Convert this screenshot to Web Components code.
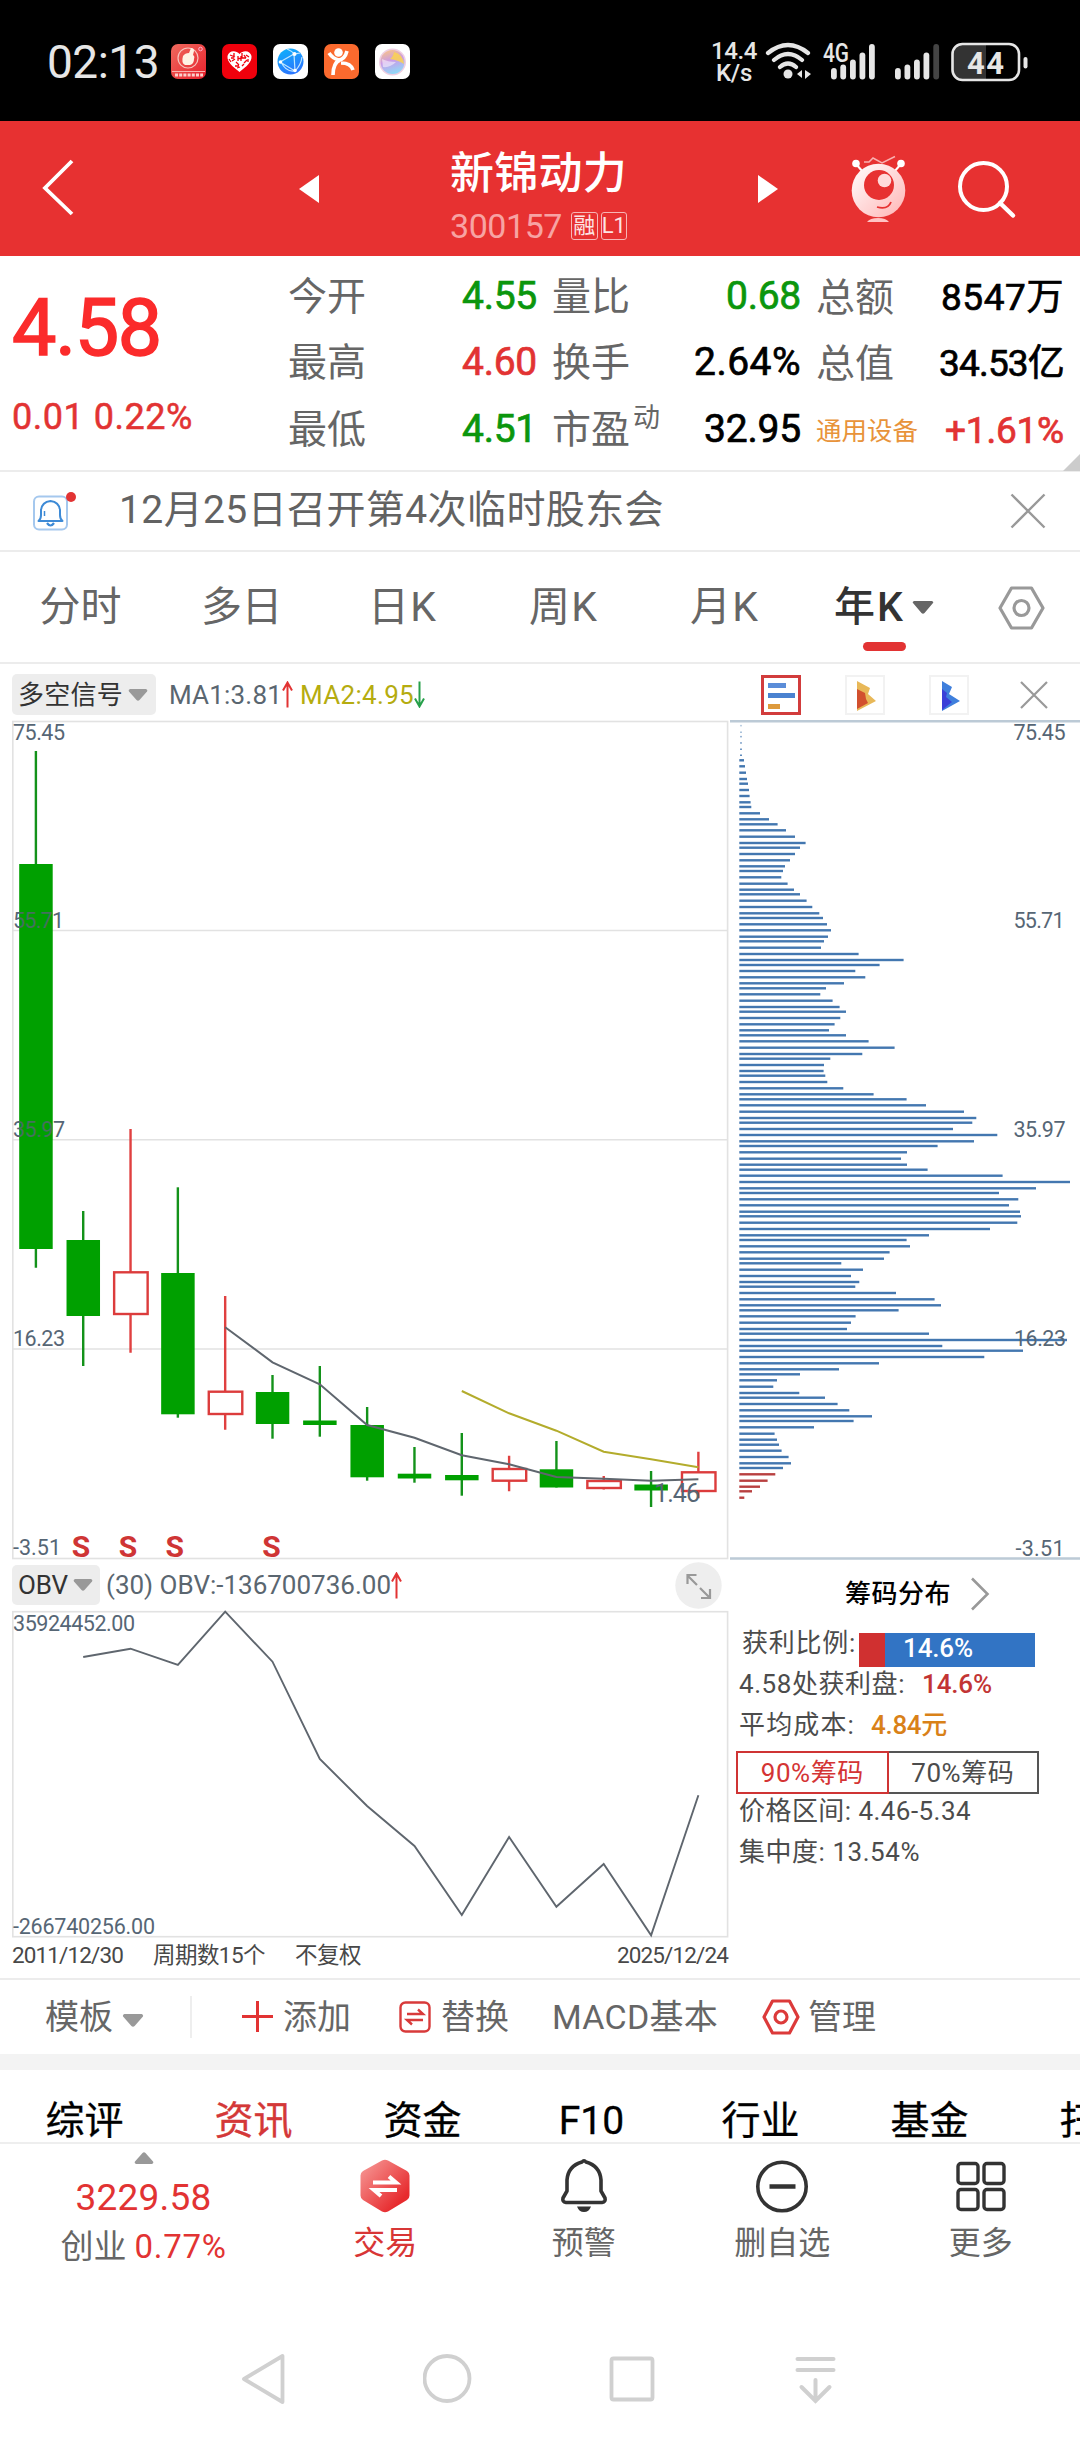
<!DOCTYPE html>
<html lang="zh-CN">
<head>
<meta charset="utf-8">
<title>新锦动力 300157</title>
<style>
  * { box-sizing: border-box; }
  html, body { margin: 0; padding: 0; }
  body {
    width: 1080px;
    height: 2440px;
    overflow: hidden;
    background: #fff;
    font-family: Roboto, "Noto Sans CJK SC", sans-serif;
    line-height: 1;
    --red: #e23333;
    --green: #0b960d;
    --gray: #666;
    --slate: #5a6670;
  }
</style>
</head>
<body>
<stock-app></stock-app>

<script>
// registers an element whose shadow root is a clone of the given markup
function component(name, html, Base = HTMLElement) {
  const template = document.createElement('template');
  template.innerHTML = `<style>*{box-sizing:border-box} svg{display:block;flex:none} :host{display:block;box-sizing:border-box}</style>` + html;
  customElements.define(name, class extends Base {
    constructor() {
      super();
      this.attachShadow({ mode: 'open' });
      this.shadowRoot.appendChild(template.content.cloneNode(true));
    }
  });
}

// single line of text, tracked so that it takes exactly `w` pixels
class TextRun extends HTMLElement {
  connectedCallback() {
    if (!this.shadowRoot) {
      this.attachShadow({ mode: 'open' });
      this.shadowRoot.innerHTML = `<style>
        :host { display: block; flex: none; white-space: nowrap; width: max-content; }
      </style><slot></slot>`;
    }
    const w = Number(this.getAttribute('w'));
    const n = this.textContent.length;
    if (!w || !n) return;
    const natural = this.getBoundingClientRect().width;
    this.style.letterSpacing = ((w - natural) / n).toFixed(3) + 'px';
    this.style.width = w + 'px';
  }
}
customElements.define('text-run', TextRun);

component('status-bar', `
  <style>
    :host { display: flex; height: 121px; background: #000; color: #e6e6e6; padding: 0 52px 0 47px; }
    .left, .right { display: flex; align-items: center; height: 123px; }
    .left { flex: 1; gap: 16px; }
    .time { font-size: 46px; margin-right: -4px; }
    .rate { font-size: 24px; line-height: 22px; margin-right: 8px; text-align: center; font-weight: 500; }
    .rate text-run { margin: 0 auto; }
  </style>
  <div class="left">
    <text-run class="time" w="112">02:13</text-run>
    <svg width="35" height="35" viewBox="0 0 35 35">
      <defs><linearGradient id="a" x2="1" y2="1"><stop stop-color="#ef6a5e"/><stop offset="1" stop-color="#e8202c"/></linearGradient></defs>
      <rect width="35" height="35" rx="7" fill="url(#a)"/>
      <circle cx="17" cy="14" r="10" fill="none" stroke="#f6c4bc" stroke-width="1.2"/>
      <path d="M12 12q2-3 6-3l2-5q3 0 3 3l-1 4q2 1 1 4 0 5-4 6h-5q-4-2-2-9z" fill="#fff2e4"/>
      <circle cx="29.500" cy="5" r="1.800" fill="none" stroke="#fbd" stroke-width=".9"/>
      <path d="M1 27.500h33" stroke="#f9b3ae" stroke-width="1"/>
      <path d="M4 31h28" stroke="#fbd0cc" stroke-width="3" stroke-dasharray="3 1.200"/>
    </svg>
    <svg width="35" height="35" viewBox="0 0 35 35">
      <rect width="35" height="35" rx="7" fill="#f0000c"/>
      <path d="M17.500 28C10 22 5 18 5.500 12 7 6 14 6 17.500 10 21 6 28 6 29.500 12 30 18 25 22 17.500 28z" fill="#fff"/>
      <path d="M8 11l5 2M10 17l3-2M14 18l3 3M20 9v5h4M16 12v5M19 12v5M16 14.500h3M22 19l3-3M13 22h4M20 22l2-2M9 14h3M24 11l3 2M12 9v3M26 15v3M15 24l3-1M7 15l2 3M22 11l2 3" stroke="#f0000c" stroke-width="1.300" fill="none"/>
    </svg>
    <svg width="35" height="35" viewBox="0 0 35 35">
      <defs><linearGradient id="b" x2=".4" y2="1"><stop stop-color="#0db4fa"/><stop offset="1" stop-color="#2a77ff"/></linearGradient></defs>
      <rect width="35" height="35" rx="7" fill="#fff"/>
      <circle cx="17.500" cy="17.500" r="13" fill="url(#b)"/>
      <path d="M7 18L21 10l1 17zM14 5q5 2 7 5l6-1M21 27q-8 1-13-9M22 27q6-6 7-14" fill="none" stroke="#bfe6ff" stroke-width="1.200"/>
      <circle cx="21.500" cy="10" r="2" fill="#fff"/><circle cx="7.500" cy="18" r="1.800" fill="#fff"/><circle cx="22" cy="26.500" r="1.800" fill="#fff"/>
    </svg>
    <svg width="35" height="35" viewBox="0 0 35 35">
      <rect width="35" height="35" rx="7" fill="#fb6a2e"/>
      <circle cx="14.500" cy="8.500" r="4.300" fill="#fff"/>
      <path d="M5 9q4 6 10 7 6-1 8-9M9 31q0-12 7-15M17 19q10 0 12 7" fill="none" stroke="#fff" stroke-width="3.600"/>
    </svg>
    <svg width="35" height="35" viewBox="0 0 35 35">
      <defs><linearGradient id="c" x1=".3" x2=".6" y2="1"><stop stop-color="#f7c28c"/><stop offset=".45" stop-color="#c99be8"/><stop offset="1" stop-color="#8ddcf8"/></linearGradient></defs>
      <rect width="35" height="35" rx="7" fill="#fff"/>
      <circle cx="17.500" cy="18" r="13.500" fill="#efcfe2"/>
      <circle cx="17.500" cy="18" r="12" fill="url(#c)"/>
      <path d="M19 8q9 2 10 12-6-4-14-5 3-2 4-7z" fill="#fbd34e" opacity=".85"/>
      <path d="M7 15q6 3 14 3-6 6-13 5z" fill="#fff" opacity=".5"/>
    </svg>
  </div>
  <div class="right">
    <div class="rate"><text-run w="46">14.4</text-run><text-run w="36">K/s</text-run></div>
    <svg width="50" height="40" viewBox="0 0 50 40" fill="none" stroke="#e6e6e6" stroke-width="4.200" stroke-linecap="round">
      <path d="M3 11q20-16 40 0M9 18q14-12 28 0M15 25q8-7 16 0"/>
      <circle cx="23" cy="32" r="4.500" fill="#e6e6e6" stroke="none"/>
      <path d="M37 28l-5 4 5 4zM40 28l6 4-6 5z" fill="#e6e6e6" stroke="none"/>
    </svg>
    <svg width="135" height="44" viewBox="815 39 135 44" fill="#e6e6e6">
      <text x="823" y="61" font-size="25" font-weight="500" textLength="26" lengthAdjust="spacingAndGlyphs">4G</text>
      <rect x="831" y="67" width="5.800" height="11.500" rx="2.900"/><rect x="840.300" y="63.500" width="5.800" height="15" rx="2.900"/>
      <rect x="850" y="58.500" width="5.800" height="20" rx="2.900"/><rect x="859.500" y="51.500" width="5.800" height="27" rx="2.900"/>
      <rect x="869" y="43" width="5.800" height="35.500" rx="2.900"/>
      <rect x="895" y="67" width="5.800" height="11.500" rx="2.900"/><rect x="904.500" y="63.500" width="5.800" height="15" rx="2.900"/>
      <rect x="914" y="58.500" width="5.800" height="20" rx="2.900"/><rect x="923.500" y="51.500" width="5.800" height="27" rx="2.900"/>
      <rect x="933.300" y="43" width="5.800" height="35.500" rx="2.900" fill="#444"/>
    </svg>
    <svg width="78" height="40" viewBox="950 40 78 40">
      <rect x="952.500" y="42" width="66.500" height="36" rx="10" fill="#000"/>
      <path d="M986 42H962q-9.500 0-9.500 10v16q0 10 9.500 10h24z" fill="#333"/>
      <rect x="952.500" y="42" width="66.500" height="36" rx="10" fill="none" stroke="#e6e6e6" stroke-width="2.600"/>
      <rect x="1023.500" y="55" width="4" height="11.500" rx="2" fill="#e6e6e6"/>
      <text x="967" y="72" font-size="31" font-weight="700" fill="#e6e6e6" textLength="37">44</text>
    </svg>
  </div>
`);

component('stock-header', `
  <style>
    :host { display: flex; align-items: center; height: 135px; padding: 0 0 4px 41px; background: #e73131; color: #fff; }
    .title { margin: 17px 131px 0 131px; width: 177px; }
    .name { font-size: 44px; font-weight: 500; height: 61px; line-height: 48px; }
    .sub { display: flex; align-items: center; gap: 3px; height: 30px; }
    .code { font-size: 34px; color: #f7a3a3; margin-right: 6px; }
    .badge {
      display: flex; align-items: center; justify-content: center;
      width: 27px; height: 28px; border: 1.500px solid #f7b5b5; border-radius: 3px; font-size: 22px; color: #fde4e4;
    }
  </style>
  <svg width="34" height="60" viewBox="0 0 34 60"><path d="M31 4L4 31l27 26" fill="none" stroke="#fff" stroke-width="3.800"/></svg>
  <svg style="margin:4px 0 0 224px" width="20" height="28" viewBox="0 0 20 28"><path d="M0 14L20 0v28z" fill="#fff"/></svg>
  <div class="title">
    <text-run class="name" w="177">新锦动力</text-run>
    <div class="sub">
      <text-run class="code" w="112">300157</text-run>
      <span class="badge">融</span><span class="badge">L1</span>
    </div>
  </div>
  <svg style="margin-top:4px" width="20" height="28" viewBox="0 0 20 28"><path d="M20 14L0 0v28z" fill="#fff"/></svg>
  <svg style="margin:6px 0 0 71px" width="60" height="70" viewBox="850 154 60 70">
    <defs><linearGradient id="m" x2="1" y2="1"><stop stop-color="#fff"/><stop offset="1" stop-color="#ffb4b4"/></linearGradient></defs>
    <path d="M857 163l7 8M902 163l-7 8" stroke="#fff" stroke-width="2"/>
    <circle cx="857" cy="162.500" r="3.800" fill="#fff"/><circle cx="902" cy="162.500" r="3.800" fill="#fff"/>
    <path d="M865 161h5l4-4 9 5 13-6.500" fill="none" stroke="#f9b0b0" stroke-width="1.500"/>
    <circle cx="879.500" cy="189.500" r="26.800" fill="url(#m)"/>
    <circle cx="880" cy="184" r="15" fill="#e73131"/>
    <circle cx="885.500" cy="179.500" r="6.800" fill="#ffdada"/>
    <path d="M878 206q11 3 14-5" fill="none" stroke="#e73131" stroke-width="1.800"/>
    <path d="M868 221q3-4 11-4t11 4z" fill="#ffc4c4"/>
  </svg>
  <svg style="margin:4px 0 0 46px" width="64" height="64" viewBox="955 156 64 64" fill="none" stroke="#fff" stroke-width="4">
    <circle cx="983.500" cy="185.500" r="23.500"/><path d="M1000 202l13 12.500" stroke-width="4.500" stroke-linecap="round"/>
  </svg>
`);

component('stat-cell', `
  <style>
    :host { display: flex; align-items: center; justify-content: space-between; color: #000; font-size: 39px; height: 66.500px; }
    .label { display: flex; color: var(--gray); font-size: var(--label-size, 39px); padding-top: 2px; }
    .value { font-size: var(--value-size, 39px); -webkit-text-stroke: .7px; }
  </style>
  <div class="label"><slot name="label"></slot></div>
  <div class="value"><slot></slot></div>
`);

component('quote-panel', `
  <style>
    :host { display: flex; height: 216px; border-bottom: 2px solid #ececec; position: relative; }
    .price { width: 288px; padding: 32px 0 0 12px; color: var(--red); }
    .last { font-size: 79px; line-height: 80px; color: #fb2b2b; -webkit-text-stroke: 1.600px; }
    .diff { font-size: 36px; line-height: 40px; margin-top: 29px; -webkit-text-stroke: .5px; }
    .col { width: 249px; margin-right: 15px; padding-top: 7px; }
    .col.last-col { width: 248px; margin: 0; padding-top: 8px; --value-size: 37px; }
    .up { color: var(--red); }
    .down { color: var(--green); }
    sup { font-size: 27px; line-height: 27px; margin: -6px 0 0 3px; }
    .corner { position: absolute; right: 0; bottom: -1px; }
  </style>
  <div class="price">
    <text-run class="last" w="149">4.58</text-run>
    <text-run class="diff" w="181">0.01 0.22%</text-run>
  </div>
  <div class="col">
    <stat-cell><span slot="label">今开</span><text-run class="down" w="75">4.55</text-run></stat-cell>
    <stat-cell><span slot="label">最高</span><text-run class="up" w="75">4.60</text-run></stat-cell>
    <stat-cell><span slot="label">最低</span><text-run class="down" w="75">4.51</text-run></stat-cell>
  </div>
  <div class="col">
    <stat-cell><span slot="label">量比</span><text-run class="down" w="75">0.68</text-run></stat-cell>
    <stat-cell><span slot="label">换手</span><text-run w="107">2.64%</text-run></stat-cell>
    <stat-cell><span slot="label">市盈</span><sup slot="label">动</sup><text-run w="97">32.95</text-run></stat-cell>
  </div>
  <div class="col last-col">
    <stat-cell><span slot="label">总额</span><text-run w="123">8547万</text-run></stat-cell>
    <stat-cell><span slot="label">总值</span><text-run w="125">34.53亿</text-run></stat-cell>
    <stat-cell style="--label-size:25.500px"><span slot="label" style="color:#e8933a">通用设备</span><text-run class="up" w="119">+1.61%</text-run></stat-cell>
  </div>
  <svg class="corner" width="17" height="17" viewBox="0 0 17 17"><path d="M17 0v17H0z" fill="#ccc"/></svg>
`);

component('notice-bar', `
  <style>
    :host { display: flex; align-items: center; height: 80px; padding: 0 34px 1px 31px; border-bottom: 2px solid #ececec; }
    .text { flex: 1; margin-left: 42px; font-size: 39px; color: #626262; }
  </style>
  <svg width="46" height="44" viewBox="30 488 46 44" fill="none" stroke="#3d8ad6">
    <rect x="33" y="495.500" width="33" height="33" rx="5" stroke="#a5c8ee" stroke-width="2"/>
    <path d="M37.500 520q2.500-2 2.500-6v-5q1-8 9.500-9 8.500 1 9.500 9v5q0 4 2.500 6z" stroke-width="2" stroke-linejoin="round"/>
    <path d="M46 522q3.500 5 7 0" stroke-width="2.200"/><path d="M43.500 515v-5" stroke-width="1.500"/>
    <circle cx="70" cy="496" r="5" fill="#e23333" stroke="none"/>
  </svg>
  <div class="text"><text-run w="545">12月25日召开第4次临时股东会</text-run></div>
  <svg width="36" height="36" viewBox="0 0 36 36"><path d="M1.500 1.500l33 33M34.500 1.500l-33 33" stroke="#999" stroke-width="2.400"/></svg>
`);

component('period-tabs', `
  <style>
    :host { display: flex; height: 112px; border-bottom: 2px solid #ececec; font-size: 41px; color: var(--gray); }
    .tab { position: relative; width: 161px; display: flex; align-items: center; justify-content: center; gap: 7px; padding-top: 1px; }
    .active { color: #333; font-weight: 500; padding-right: 3px; }
    .active::after {
      content: ""; position: absolute; left: 58px; bottom: 11px; width: 43px; height: 9px; border-radius: 5px; background: var(--red);
    }
    .gear { margin: 34px 0 0 31px; }
  </style>
  <div class="tab">分时</div>
  <div class="tab"><text-run w="81">多日</text-run></div>
  <div class="tab"><text-run w="69">日K</text-run></div>
  <div class="tab"><text-run w="69">周K</text-run></div>
  <div class="tab"><text-run w="69">月K</text-run></div>
  <div class="tab active"><text-run w="71">年K</text-run><svg width="22" height="13" viewBox="0 0 22 13"><path d="M2 0h18q2 1 1 2L12.500 12q-1.500 1.500-3 0L1 2Q0 1 2 0z" fill="#666"/></svg></div>
  <svg class="gear" width="50" height="44" viewBox="0 0 50 44" fill="none" stroke="#999" stroke-width="3.200">
    <path d="M14.500 2h20L46 22 34.500 42h-20L3 22z" stroke-linejoin="round"/><circle cx="24.500" cy="22" r="7.500"/>
  </svg>
`);

component('menu-pill', `
  <style>
    :host { display: flex; align-items: center; flex: none; height: 41px; gap: 5px; padding-left: 6px; background: #ededed; border-radius: 5px; font-size: 26px; color: #333; }
  </style>
  <slot></slot>
  <svg width="20" height="12" viewBox="0 0 20 12"><path d="M2 0h16q2 1 1 2.500L11.500 11q-1.500 1.500-3 0L1 2.500Q0 1 2 0z" fill="#999"/></svg>
`);

component('trend-arrow', `
  <style>
    :host { flex: none; width: 11px; color: var(--red); }
    :host([down]) { color: #26a04a; transform: rotate(180deg); }
  </style>
  <svg width="11" height="27" viewBox="0 0 11 27"><path d="M5.500 26.500V2M1 9.500L5.500 1.500l4.500 8" fill="none" stroke="currentColor" stroke-width="2"/></svg>
`);

component('indicator-bar', `
  <style>
    :host { display: flex; align-items: center; height: 56px; padding: 5px 31px 0 12px; font-size: 26px; color: var(--slate); }
    menu-pill { width: 144px; }
    .ma1 { margin-left: 13px; }
    .ma2 { margin-left: 7px; color: #b5ac10; }
    .spacer { flex: 1; }
    .modes { display: flex; align-items: center; gap: 44px; }
  </style>
  <menu-pill><text-run w="105">多空信号</text-run></menu-pill>
  <text-run class="ma1" w="113">MA1:3.81</text-run><trend-arrow></trend-arrow>
  <text-run class="ma2" w="114">MA2:4.95</text-run><trend-arrow down></trend-arrow>
  <div class="spacer"></div>
  <div class="modes">
    <svg width="40" height="40" viewBox="0 0 40 40">
      <rect x="1.500" y="1.500" width="37" height="37" fill="#fff" stroke="#d23c3c" stroke-width="3"/>
      <rect x="7" y="8" width="18" height="5" fill="#5b8dd8"/><rect x="7" y="18" width="27" height="5" fill="#4a82d0"/><rect x="7" y="29" width="12" height="5" fill="#dd9a3c"/>
    </svg>
    <svg width="40" height="40" viewBox="0 0 40 40">
      <rect x="1" y="1" width="38" height="38" fill="#fff" stroke="#f2f2f2" stroke-width="2"/>
      <path d="M12 6l13 7-2 6 8 7-19 10z" fill="#e8b858"/><path d="M12 14l8 4 1 6 2 4-11 6z" fill="#d2502e"/>
    </svg>
    <svg width="40" height="40" viewBox="0 0 40 40">
      <rect x="1" y="1" width="38" height="38" fill="#fff" stroke="#f2f2f2" stroke-width="2"/>
      <path d="M13 6l10 6-3 7 11 7-18 10z" fill="#3f7fdc"/><path d="M13 14l5 4-1 4 6 5-10 8z" fill="#3a3fd8"/>
    </svg>
    <svg style="margin-left:6px" width="30" height="30" viewBox="0 0 30 30"><path d="M2 2l26 26M28 2L2 28" stroke="#999" stroke-width="2.200"/></svg>
  </div>
`);

// x centre of the n-th yearly bar, shared by both charts
const barX = n => 35.9 + 47.32 * n;
const points = (ys, first) => ys.map((y, i) => `${barX(first + i).toFixed(1)},${y}`).join(' ');
const label = (x, y, text, w, size = 21.5) =>
  `<text x="${x}" y="${y}" font-size="${size}" textLength="${w}" fill="#566675">${text}</text>`;

// high, body top, body bottom, low, rising
const CANDLES = [
  [31, 144, 529, 547.7, 0], [491, 520, 596, 646, 0], [409, 552.3, 594, 632.7, 1],
  [467.3, 553, 694.3, 697.7, 0], [576, 671.7, 694, 709.7, 1], [655, 672, 704, 718.7, 0],
  [646, 700.5, 705, 716.7, 0], [687, 705, 757.3, 760.7, 0], [727, 753.7, 758.5, 762.7, 0],
  [713, 755, 760.3, 775.7, 0], [735.7, 749, 760.7, 771.3, 1], [721, 749.3, 767.5, 767.5, 0],
  [756, 761, 768, 769.5, 1], [751, 764.5, 770.5, 787, 0], [731.7, 752.3, 771, 778.3, 1]
];
const MA1 = [607.3, 642.3, 664.3, 705, 717.7, 735.3, 744.3, 757, 758.7, 760.7, 759.3];
const MA2 = [671, 693.3, 710.7, 731.7, 739.3, 747.3];

class CandleChart extends HTMLElement {
  constructor() {
    super();
    this.attachShadow({ mode: 'open' });
    const candles = CANDLES.map(([high, top, bottom, low, rising], i) => {
      const x = barX(i);
      if (rising) {
        return `<path d="M${x} ${high}V${top}M${x} ${bottom}V${low}" stroke="#e04040" stroke-width="2.400"/>
          <rect x="${x - 16.4}" y="${top}" width="33.500" height="${bottom - top}" fill="none" stroke="#dc3c3c" stroke-width="2.400"/>`;
      }
      return `<path d="M${x} ${high}V${low}" stroke="#13921a" stroke-width="2.400"/>
        <rect x="${x - 16.7}" y="${top}" width="33.500" height="${bottom - top}" fill="#00a000"/>`;
    }).join('');
    const grid = [210.5, 419.7, 629].map(y => `<path d="M13 ${y}H727.500" stroke="#e2e2e2" stroke-width="1.600"/>`).join('');
    const signals = [81, 128, 174.7, 271.5].map(x =>
      `<text x="${x}" y="837" font-size="30" font-weight="700" fill="#cf3535" text-anchor="middle">S</text>`).join('');
    this.shadowRoot.innerHTML = `
      <style>:host { display: block; } svg { display: block; overflow: visible; }</style>
      <svg width="730" height="840" viewBox="0 0 730 840">
        <rect x="12.800" y="1.500" width="714.800" height="837" fill="none" stroke="#e2e2e2" stroke-width="1.600"/>
        ${grid}${candles}
        <polyline points="${points(MA1, 4)}" fill="none" stroke="#5f666e" stroke-width="2"/>
        <polyline points="${points(MA2, 9)}" fill="none" stroke="#b3ac2c" stroke-width="2"/>
        ${label(13, 20, '75.45', 52)}${label(13, 208, '55.71', 51)}${label(13, 416.500, '35.97', 52)}
        ${label(13, 626, '16.23', 52)}${label(13, 835, '-3.51', 48)}
        <rect x="19.200" y="190" width="33.500" height="230" fill="#00a000" opacity=".2"/>
        ${label(654, 782, '1.46', 46, 25)}
        ${signals}
      </svg>`;
  }
}
customElements.define('candle-chart', CandleChart);

// y and right end of each price level, in thirds of a pixel
const CHIPS = `151:72 169:75 188:78 207:81 221:84 240:87 258:89 277:92 291:94 310:120 328:147 343:173 361:198
380:225 399:257 413:240 432:225 451:210 469:195 483:189 502:184 521:203 539:222 553:240 572:260 591:277
610:298 624:309 643:321 661:333 680:324 694:312 713:303 732:416 750:551 765:479 783:406 802:436 820:372
835:318 853:301 872:338 891:359 905:378 924:361 943:344 961:327 976:378 994:446 1013:524 1032:427 1046:331
1065:312 1083:311 1097:316 1116:322 1135:370 1153:461 1168:560 1186:618 1205:732 1224:769 1238:757 1257:699
1275:832 1294:762 1308:653 1327:561 1346:543 1364:561 1379:623 1397:848 1416:1050 1435:948 1449:837 1468:895
1486:867 1505:900 1519:903 1538:892 1557:810 1576:627 1590:560 1609:570 1627:509 1646:492 1660:364 1679:429
1698:393 1716:418 1730:406 1749:528 1768:644 1786:663 1801:536 1819:407 1838:393 1857:381 1871:627 1890:1041
1908:667 1922:909 1941:793 1960:477 1978:357 1993:240 2011:171 2030:160 2049:238 2063:315 2082:353 2101:388
2119:456 2133:401 2152:282 2171:164 2189:171 2204:177 2222:185 2241:206 2260:213 2274:189 2293:166 2312:143
2330:120 2344:96 2363:73`.split(/\s+/).map(s => s.split(':').map(Number));

class ChipChart extends HTMLElement {
  constructor() {
    super();
    this.attachShadow({ mode: 'open' });
    const bars = CHIPS.map(([y, x]) =>
      `<rect x="9.300" y="${(y / 3 - 11.2).toFixed(1)}" width="${((x - 58) / 3).toFixed(1)}" height="2.400" fill="${y > 2280 ? '#b84040' : '#4377b0'}"/>`).join('');
    const dots = [47, 67, 80, 99, 118, 136].map((y, i) =>
      `<rect x="10" y="${(y / 3 - 10.8).toFixed(1)}" width="2" height="1.500" fill="#4377b0" opacity="${0.35 + i * 0.1}"/>`).join('');
    this.shadowRoot.innerHTML = `
      <style>:host { display: block; } svg { display: block; overflow: visible; }</style>
      <svg width="350" height="840" viewBox="0 0 350 840">
        <path d="M0 1.200H350M0 838.500H350" stroke="#bccad6" stroke-width="2.600"/>
        ${dots}${bars}
        ${label(283.5, 20, '75.45', 52)}${label(283.5, 208, '55.71', 51)}${label(283.5, 416.5, '35.97', 52)}
        ${label(284, 626, '16.23', 52)}${label(285.5, 835.5, '-3.51', 49)}
      </svg>`;
  }
}
customElements.define('chip-chart', ChipChart);

component('obv-header', `
  <style>
    :host { display: flex; align-items: center; height: 50px; padding: 0 8px 0 12px; font-size: 26px; color: var(--slate); }
    menu-pill { width: 88px; height: 40px; }
    .value { margin-left: 6px; }
    .spacer { flex: 1; }
  </style>
  <menu-pill><text-run w="50">OBV</text-run></menu-pill>
  <text-run class="value" w="285">(30) OBV:-136700736.00</text-run><trend-arrow></trend-arrow>
  <div class="spacer"></div>
  <svg width="47" height="47" viewBox="0 0 47 47">
    <circle cx="23.500" cy="23.500" r="23.200" fill="#eee"/>
    <path d="M22 23L13 14M12.500 22v-9h9M25 26l9 9M35 27v9h-9" fill="none" stroke="#999" stroke-width="2.200"/>
  </svg>
`);

const OBV = [47, 38.7, 55, 1.7, 51.7, 149, 196, 236, 305, 227, 296.7, 254, 325.3, 185.3];

component('obv-chart', `
  <svg width="730" height="328" viewBox="0 0 730 328">
    <rect x="12.800" y="1.700" width="714.800" height="325" fill="none" stroke="#e2e2e2" stroke-width="1.600"/>
    <polyline points="${points(OBV, 1)}" fill="none" stroke="#5f666e" stroke-width="1.900"/>
    ${label(13, 20.5, '35924452.00', 122)}${label(13, 323.5, '-266740256.00', 142)}
  </svg>
`);

component('axis-row', `
  <style>
    :host { display: flex; align-items: center; height: 40px; padding: 0 2px 6px 12px; font-size: 22.500px; color: #484848; }
    .group { flex: 1; display: flex; gap: 30px; }
  </style>
  <div class="group">
    <text-run w="111">2011/12/30</text-run>
    <text-run w="112">周期数15个</text-run>
    <text-run w="66">不复权</text-run>
  </div>
  <text-run w="111">2025/12/24</text-run>
`);

component('chip-info', `
  <style>
    :host { padding: 16px 0 0 9px; font-size: 26px; color: #4c4c4c; }
    .title { display: flex; align-items: center; height: 36px; padding-left: 106px; color: #000; font-weight: 500; gap: 19px; }
    .row { display: flex; align-items: center; height: 41px; }
    .ratio { height: 40px; margin-top: 11px; padding-left: 3px; }
    .bar { display: flex; align-items: center; width: 176px; height: 34px; margin: 14px 0 0 3px; padding: 0 0 4px 44px;
      background: linear-gradient(90deg, #d03030 26px, #3274c4 26px); color: #fff; font-weight: 500; }
    .profit { color: #c23434; font-weight: 500; margin-left: 17px; }
    .cost { color: #d98118; font-weight: 500; margin-left: 16px; }
    .switch { display: flex; width: 303px; height: 43px; margin: 6px 0 0 -3px; }
    .switch div { flex: 1; display: flex; align-items: center; justify-content: center; border: 2.500px solid #555; }
    .switch .on { color: #d43434; border-color: #cf3434; margin-right: -2px; z-index: 1; }
  </style>
  <div class="title"><text-run w="106">筹码分布</text-run>
    <svg width="20" height="34" viewBox="0 0 20 34"><path d="M2 1.500L17.500 17 2 32.500" fill="none" stroke="#999" stroke-width="2.600"/></svg></div>
  <div class="row ratio"><text-run w="114">获利比例:</text-run><div class="bar"><text-run w="70">14.6%</text-run></div></div>
  <div class="row"><text-run w="166">4.58处获利盘:</text-run><text-run class="profit" w="70">14.6%</text-run></div>
  <div class="row"><text-run w="116">平均成本:</text-run><text-run class="cost" w="76">4.84元</text-run></div>
  <div class="switch"><div class="on"><text-run w="103">90%筹码</text-run></div><div><text-run w="103">70%筹码</text-run></div></div>
  <div class="row" style="margin-top:-4px"><text-run w="232">价格区间: 4.46-5.34</text-run></div>
  <div class="row"><text-run w="181">集中度: 13.54%</text-run></div>
`);

component('template-bar', `
  <style>
    :host { display: flex; align-items: center; height: 92px; padding: 0 0 17px 45px; font-size: 34px; color: var(--gray);
      border-top: 2px solid #ececec; background: linear-gradient(#fff 74px, #f3f3f3 74px); }
    .rule { width: 2px; height: 42px; margin: 0 50px 0 46px; background: #eee; }
  </style>
  <text-run w="68">模板</text-run>
  <svg style="margin:8px 0 0 9px" width="22" height="13" viewBox="0 0 20 12"><path d="M2 0h16q2 1 1 2.500L11.500 11q-1.500 1.500-3 0L1 2.500Q0 1 2 0z" fill="#999"/></svg>
  <div class="rule"></div>
  <svg width="31" height="31" viewBox="0 0 31 31"><path d="M15.500 0v31M0 15.500h31" stroke="#e23333" stroke-width="3"/></svg>
  <text-run style="margin-left:10px" w="68">添加</text-run>
  <svg style="margin-left:48px" width="32" height="32" viewBox="0 0 32 32" fill="none" stroke="#d83a3a" stroke-width="2.400">
    <rect x="1.500" y="1.500" width="29" height="29" rx="5"/><path d="M8 13h16l-5-4.500M24 19H8l5 4.500"/>
  </svg>
  <text-run style="margin-left:10px" w="68">替换</text-run>
  <text-run style="margin-left:43px" w="166">MACD基本</text-run>
  <svg style="margin-left:44px" width="38" height="36" viewBox="0 0 38 36" fill="none" stroke="#dc3a3a" stroke-width="3.200">
    <path d="M10.500 2h17L36 18l-8.500 16h-17L2 18z" stroke-linejoin="round"/><circle cx="19" cy="18" r="6"/>
  </svg>
  <text-run style="margin-left:8px" w="68">管理</text-run>
`);

component('content-tabs', `
  <style>
    :host { display: flex; height: 74px; padding-top: 28px; font-size: 39px; line-height: 46px; color: #000;
      border-bottom: 2px solid #eee; overflow: hidden; }
    div { flex: none; width: 169px; text-align: center; -webkit-text-stroke: .3px; }
    .on { color: #d43838; }
  </style>
  <div>综评</div><div class="on">资讯</div><div>资金</div><div>F10</div><div>行业</div><div>基金</div><div>扫雷</div>
`);

component('nav-item', `
  <style>
    :host { width: 198.500px; display: flex; flex-direction: column; align-items: center; padding-top: 14px; font-size: 32px; color: var(--gray); }
    span { margin-top: 9px; line-height: 40px; }
  </style>
  <slot name="icon"></slot>
  <span><slot></slot></span>
`);

component('bottom-nav', `
  <style>
    :host { display: flex; height: 156px; }
    .index { width: 286px; display: flex; flex-direction: column; align-items: center; color: var(--red); padding: 8px 0 0 1px; }
    .point { font-size: 37px; line-height: 40px; margin-top: 14px; }
    .change { display: flex; gap: 8px; font-size: 33px; line-height: 40px; margin-top: 9px; }
    .change .name { color: var(--gray); }
  </style>
  <div class="index">
    <svg width="20" height="12" viewBox="0 0 20 12"><path d="M2 12h16q2-1 1-2.500L11.500 1q-1.500-1.500-3 0L1 9.500Q0 11 2 12z" fill="#999"/></svg>
    <text-run class="point" w="136">3229.58</text-run>
    <div class="change"><text-run class="name" w="66">创业</text-run><text-run w="92">0.77%</text-run></div>
  </div>
  <nav-item style="color:#d83636">
    <svg slot="icon" width="56" height="56" viewBox="0 0 56 56">
      <defs><linearGradient id="g" x2="1" y2="1"><stop offset=".1" stop-color="#f5908e"/><stop offset=".8" stop-color="#e72b2e"/></linearGradient></defs>
      <path d="M25 2.500q3-1.500 6 0l19 10.500q2.500 1.500 2.500 4.500v20q0 3-2.500 4.500L31 53.500q-3 1.500-6 0L6 42q-2.500-1.500-2.500-4.500v-20Q3.500 14.500 6 13z" fill="url(#g)"/>
      <path d="M16 24.500h23l-7-6M40 32H17l7 6" fill="none" stroke="#fff" stroke-width="4"/>
    </svg>交易</nav-item>
  <nav-item>
    <svg slot="icon" width="56" height="56" viewBox="0 0 56 56" fill="none" stroke="#333" stroke-width="3.600" stroke-linejoin="round">
      <path d="M26 4q2-2.500 4 0 14 4 15 18v11l4 7q1 4-3 4.500H10q-4-.5-3-4.500l4-7V22Q12 8 26 4z"/>
      <path d="M21 48.500h14q-2 5.500-7 5.500t-7-5.500z" fill="#333" stroke="none"/>
    </svg>预警</nav-item>
  <nav-item>
    <svg slot="icon" width="56" height="56" viewBox="0 0 56 56" fill="none" stroke="#333" stroke-width="3.600">
      <circle cx="28" cy="28.500" r="24.200"/><path d="M15.500 28.500h26" stroke-width="4.500"/>
    </svg>删自选</nav-item>
  <nav-item>
    <svg slot="icon" width="56" height="56" viewBox="0 0 56 56" fill="none" stroke="#333" stroke-width="3.400">
      <rect x="5" y="5.500" width="20" height="20" rx="3"/><rect x="31" y="5.500" width="20" height="20" rx="3"/>
      <rect x="5" y="31.500" width="20" height="20" rx="3"/><rect x="31" y="31.500" width="20" height="20" rx="3"/>
    </svg>更多</nav-item>
`);

component('system-nav', `
  <style>
    :host { display: flex; gap: 134px; height: 141px; align-items: flex-start; padding: 53px 0 0 239px; }
  </style>
  <svg width="50" height="52" viewBox="0 0 50 52"><path d="M43.500 3v46L5 26z" fill="none" stroke="#d0d0d0" stroke-width="3.800" stroke-linejoin="round"/></svg>
  <svg width="50" height="52" viewBox="0 0 50 52"><circle cx="24" cy="25.500" r="22.500" fill="none" stroke="#d0d0d0" stroke-width="3.800"/></svg>
  <svg width="50" height="52" viewBox="0 0 50 52"><rect x="4.500" y="5.500" width="41" height="41" rx="2" fill="none" stroke="#d0d0d0" stroke-width="3.800"/></svg>
  <svg width="50" height="52" viewBox="0 0 50 52" fill="none" stroke="#d0d0d0" stroke-width="4" stroke-linecap="round"><path d="M6.500 6h36M6.500 17h36M24.500 27v20M10.500 34l14 14 14-14"/></svg>
`);

component('stock-app', `
  <style>
    :host { width: 1080px; background: #fff; }
    .charts { display: grid; grid-template-columns: 730px 350px; height: 1258px; }
  </style>
  <status-bar></status-bar>
  <stock-header></stock-header>
  <quote-panel></quote-panel>
  <notice-bar></notice-bar>
  <period-tabs></period-tabs>
  <indicator-bar></indicator-bar>
  <div class="charts">
    <div>
      <candle-chart></candle-chart>
      <obv-header></obv-header>
      <obv-chart></obv-chart>
      <axis-row></axis-row>
    </div>
    <div>
      <chip-chart></chip-chart>
      <chip-info></chip-info>
    </div>
  </div>
  <template-bar></template-bar>
  <content-tabs></content-tabs>
  <bottom-nav></bottom-nav>
  <system-nav></system-nav>
`);
</script>
</body>
</html>
